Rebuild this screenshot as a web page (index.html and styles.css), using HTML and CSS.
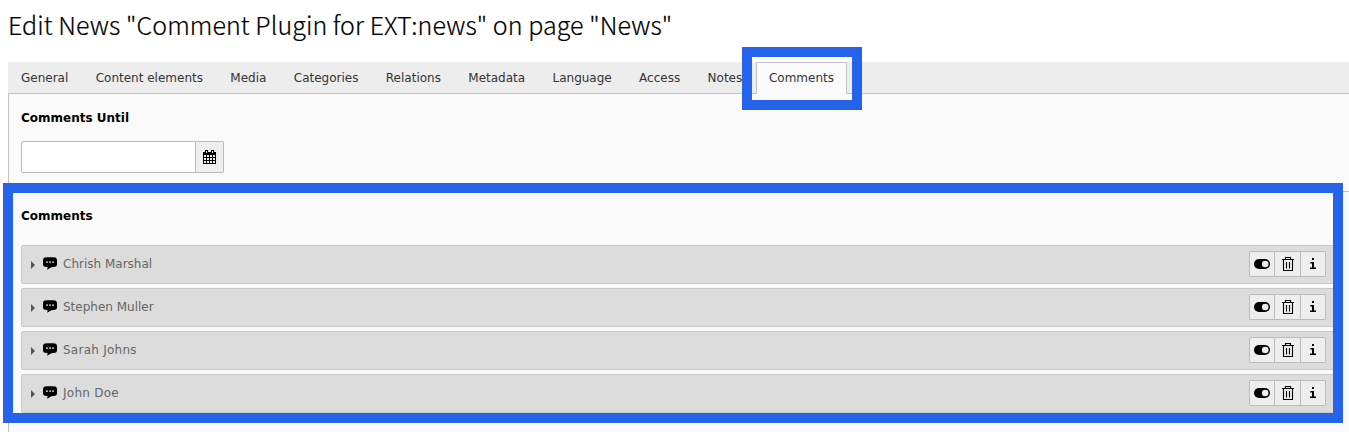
FILE: index.html
```
<!DOCTYPE html>
<html lang="en">
<head>
<meta charset="utf-8">
<title>Edit News</title>
<link rel="stylesheet" href="styles.css">
</head>
<body>
<svg width="0" height="0" class="defs">
  <symbol id="comment" viewBox="0 0 14 13"><path d="M2 .6C5 .1 9 .1 12 .6 13.400.8 14 1.800 14 3.500V7C14 8.700 13.300 9.500 12 9.700L8.300 10.200 4.200 12.800 4.600 10.100 2 9.700C.7 9.500 0 8.700 0 7V3.500C0 1.800.6.8 2 .6z"/><path d="M3 4.500h2v1.200H3zM6 4.500h2v1.200H6zM9 4.500h2v1.200H9z" fill="#ddd"/></symbol>
  <symbol id="toggle" viewBox="0 0 16 10"><rect width="16" height="10" rx="5"/><circle cx="11.200" cy="5" r="3.300" fill="#eee"/></symbol>
  <symbol id="trash" viewBox="0 0 12 14"><path d="M0 2.500h12M3.500 2.500v-2h5v2M1.500 3v10.500h9V3M4.500 5v6.500M7.500 5v6.500" fill="none" stroke="#000" stroke-width="1.100"/></symbol>
  <symbol id="info" viewBox="0 0 6 11"><path d="M2 0h2v2H2zM.3 4h3.700v5.600H6V11H0V9.600h2V5.400H.3z"/></symbol>
</svg>
<h1 class="title">Edit News "Comment Plugin for EXT:news" on page "News"</h1>
<div class="module">
  <nav class="tabs">
    <a class="tab">General</a><a class="tab">Content elements</a><a class="tab">Media</a><a class="tab">Categories</a><a class="tab">Relations</a><a class="tab">Metadata</a><a class="tab">Language</a><a class="tab">Access</a><a class="tab">Notes</a><a class="tab active">Comments</a>
  </nav>
  <main class="panel">
    <section class="until">
      <h2 class="label">Comments Until</h2>
      <div class="date">
        <input class="field" type="text" aria-label="Comments Until">
        <button class="calendar" aria-label="Choose date"><svg width="13" height="14" viewBox="0 0 13 14"><path d="M0 2h2V0h3v2h3V0h3v2h2v12H0z"/><path d="M3 1h1v2H3zM9 1h1v2H9zM1 5h2v2H1zM4 5h2v2H4zM7 5h2v2H7zM10 5h2v2h-2zM1 8h2v2H1zM4 8h2v2H4zM7 8h2v2H7zM10 8h2v2h-2zM1 11h2v2H1zM4 11h2v2H4zM7 11h2v2H7zM10 11h2v2h-2z" fill="#eee"/></svg></button>
      </div>
    </section>
    <section class="comments">
      <h2 class="label">Comments</h2>
      <div class="list">
        <div class="row"><i class="caret"></i><svg class="bubble"><use href="#comment"/></svg><span class="name">Chrish Marshal</span><div class="actions"><button class="btn"><svg width="16" height="10"><use href="#toggle"/></svg></button><button class="btn"><svg width="12" height="14"><use href="#trash"/></svg></button><button class="btn"><svg width="6" height="11"><use href="#info"/></svg></button></div></div>
        <div class="row"><i class="caret"></i><svg class="bubble"><use href="#comment"/></svg><span class="name">Stephen Muller</span><div class="actions"><button class="btn"><svg width="16" height="10"><use href="#toggle"/></svg></button><button class="btn"><svg width="12" height="14"><use href="#trash"/></svg></button><button class="btn"><svg width="6" height="11"><use href="#info"/></svg></button></div></div>
        <div class="row"><i class="caret"></i><svg class="bubble"><use href="#comment"/></svg><span class="name wide">Sarah Johns</span><div class="actions"><button class="btn"><svg width="16" height="10"><use href="#toggle"/></svg></button><button class="btn"><svg width="12" height="14"><use href="#trash"/></svg></button><button class="btn"><svg width="6" height="11"><use href="#info"/></svg></button></div></div>
        <div class="row"><i class="caret"></i><svg class="bubble"><use href="#comment"/></svg><span class="name wide">John Doe</span><div class="actions"><button class="btn"><svg width="16" height="10"><use href="#toggle"/></svg></button><button class="btn"><svg width="12" height="14"><use href="#trash"/></svg></button><button class="btn"><svg width="6" height="11"><use href="#info"/></svg></button></div></div>
      </div>
    </section>
  </main>
</div>
<div class="frame frame-tab"></div>
<div class="frame frame-list"></div>
</body>
</html>
```
FILE: styles.css
```
* { box-sizing: border-box; }
html { overflow: hidden; }
body { margin: 0; height: 432px; overflow: hidden; position: relative; background: #fff; font: 12px/18px "DejaVu Sans", sans-serif; color: #333; }
.defs { display: block; }
.title { margin: 0; height: 62px; padding: 4px 0 0 8px; font: 300 25px/40px "Noto Sans CJK SC", sans-serif; letter-spacing: .07px; -webkit-text-stroke: .2px #000; color: #000; white-space: nowrap; }
.module { margin-left: 8px; height: 370px; display: flex; flex-direction: column; }
.tabs { display: flex; height: 32px; background: #ededed; border-bottom: 1px solid #c3c3c3; }
.tab { padding: 6px 13.7px 0; height: 32px; border: 1px solid transparent; border-width: 1px 0 0; white-space: nowrap; }
.tab:first-child { padding-left: 13px; }
.tab.active { padding: 6px 12px 0; border: 1px solid #c3c3c3; border-bottom: 0; background: #fafafa; }
.panel { flex: 1; border-left: 1px solid #c3c3c3; background: #fafafa; }
.label { margin: 0; font-size: 12px; line-height: 18px; font-weight: 700; color: #000; }
.until { height: 98px; padding: 15px 0 0 12px; border-bottom: 1px solid #c3c3c3; }
.date { display: flex; width: 203px; height: 32px; margin-top: 14px; }
.field { width: 175px; padding: 0; border: 1px solid #bbb; border-radius: 2px 0 0 2px; background: #fefefe; }
.calendar { width: 28px; padding: 0; border: 1px solid #bbb; border-left: 0; border-radius: 0 2px 2px 0; background: #eee; display: flex; align-items: center; justify-content: center; }
.comments { padding: 15px 12px 0; }
.list { display: flex; flex-direction: column; gap: 4px; margin-top: 20px; }
.row { display: flex; align-items: center; height: 39px; padding: 0 10px 2px 9px; border: 1px solid #c8c8c8; border-radius: 2px; background: #dcdcdc; }
.caret { width: 4px; height: 8px; margin: 2px 8px 0 0; border: 4px solid transparent; border-left-color: #555; border-right: 0; }
.bubble { width: 14px; height: 13px; }
.name { margin-left: 6px; color: #666; }
.wide { letter-spacing: .25px; }
.actions { display: flex; margin-left: auto; }
.btn { width: 26px; height: 26px; padding: 0; border: 1px solid #bbb; background: #eee; display: flex; align-items: center; justify-content: center; }
.btn + .btn { border-left: 0; }
.btn:nth-child(2) { width: 26px; }
.btn:last-child { width: 25px; }
.btn:first-child { border-radius: 2px 0 0 2px; }
.btn:last-child { border-radius: 0 2px 2px 0; }
.frame { position: absolute; border: 10px solid #2563eb; pointer-events: none; }
.frame-tab { left: 742px; top: 47px; width: 120px; height: 63px; }
.frame-list { left: 3px; top: 183px; width: 1340px; height: 240px; }
```
